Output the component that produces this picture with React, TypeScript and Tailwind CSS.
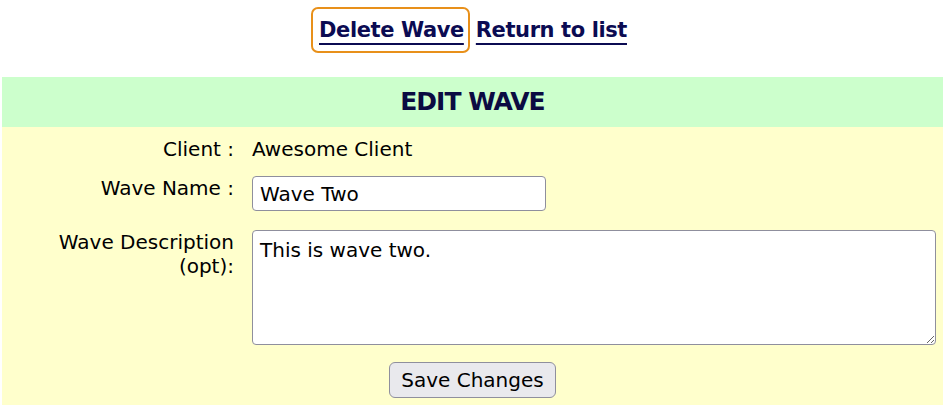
export default function App() {
  return (
    <div className="w-[952px] h-[410px] bg-white text-[20px] text-black overflow-hidden" style={{ fontFamily: '"DejaVu Sans", Verdana, sans-serif' }}>
      <div className="flex justify-center items-start gap-[6px] pt-[7px] pr-[14px] h-[77px]">
        <a
          href="#"
          className="block rounded-[7px] border-2 border-[#e8901a] pl-[6px] pr-[4px] pt-[6px] pb-[6px] text-[21px] tracking-[-0.4px] font-bold leading-[30px] text-[#0b0b52] underline decoration-2 underline-offset-[6px]"
        >
          Delete Wave
        </a>
        <a
          href="#"
          className="block pt-[8px] pb-[8px] text-[21px] tracking-[-0.4px] font-bold leading-[30px] text-[#0b0b52] underline decoration-2 underline-offset-[6px]"
        >
          Return to list
        </a>
      </div>

      <div className="ml-[2px] w-[941px]">
        <div className="h-[50px] bg-[#ccffcc] flex items-center justify-center text-[25px] tracking-[-1px] font-bold text-[#0b0b42]">
          EDIT WAVE
        </div>
        <div className="h-[278px] bg-[#ffffcc] pt-[10px]">
          <div className="grid grid-cols-[232px_1fr] gap-x-[18px]">
            <div className="text-right leading-[24px] h-[24px]">Client :</div>
            <div className="leading-[24px]">Awesome Client</div>

            <div className="text-right mt-[15px] leading-[24px]">Wave Name :</div>
            <div className="mt-[15px]">
              <input
                defaultValue="Wave Two"
                className="w-[294px] h-[35px] bg-white border border-[#8f8f9d] rounded-[4px] px-[7px] text-[20px] outline-none"
              />
            </div>

            <div className="text-right mt-[19px] leading-[24px]">
              Wave Description
              <br />
              (opt):
            </div>
            <div className="mt-[19px]">
              <textarea
                defaultValue="This is wave two."
                className="block w-[684px] h-[115px] bg-white border border-[#8f8f9d] rounded-[4px] px-[7px] py-[6px] text-[20px] leading-[26px] outline-none resize"
              />
            </div>
          </div>
          <div className="flex justify-center mt-[17px]">
            <button className="h-[36px] px-[11px] bg-[#e9e9ed] border border-[#8f8f9d] rounded-[6px] text-[20px]">
              Save Changes
            </button>
          </div>
        </div>
      </div>
    </div>
  );
}
